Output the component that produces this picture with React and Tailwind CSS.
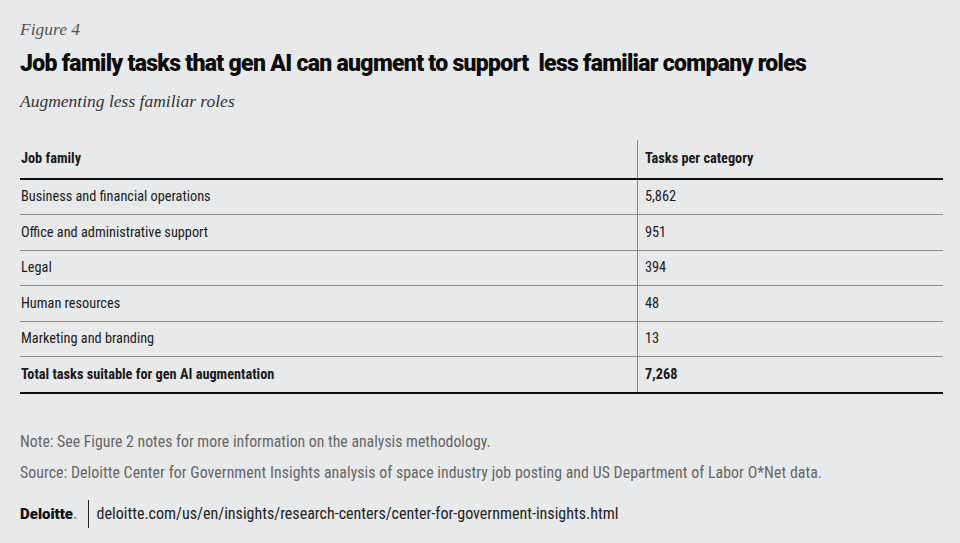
import React from "react";

const rows = [
  { name: "Business and financial operations", value: "5,862", h: "h-[35px]" },
  { name: "Office and administrative support", value: "951", h: "h-[36px]" },
  { name: "Legal", value: "394", h: "h-[35px]" },
  { name: "Human resources", value: "48", h: "h-[36px]" },
  { name: "Marketing and branding", value: "13", h: "h-[35px]" },
];

const cond = { fontFamily: '"Liberation Sans Narrow", "Roboto Condensed", "DejaVu Sans Condensed", Roboto, sans-serif' };

export default function App() {
  return (
    <div className="w-[960px] h-[543px] bg-[#e8e9eb] overflow-hidden px-[20px] pt-[18px]">
      <div
        className="text-[17.5px] leading-[22px] italic text-[#555]"
        style={{ fontFamily: '"Liberation Serif", serif' }}
      >
        Figure 4
      </div>
      <h1
        className="mt-[10px] text-[23px] leading-[28px] font-black text-[#0b0b0b] tracking-[-0.7px] whitespace-pre"
        style={{ fontFamily: 'Roboto, "Liberation Sans", sans-serif' }}
      >
        Job family tasks that gen AI can augment to support  less familiar company roles
      </h1>
      <div
        className="mt-[11px] text-[17.5px] leading-[24px] italic text-[#333]"
        style={{ fontFamily: '"Liberation Serif", serif' }}
      >
        Augmenting less familiar roles
      </div>

      <div className="mt-[27px] w-[923px] text-[14.3px] text-[#1a1a1a]" style={cond}>
        <div className="flex h-[38px] font-bold">
          <div className="w-[617px] flex items-center pl-[1px]">Job family</div>
          <div className="flex-1 flex items-center border-l border-[#888] pl-[7px]">Tasks per category</div>
        </div>
        <div className="h-[2px] bg-[#111]" />
        {rows.map((r) => (
          <div key={r.name} className={`flex ${r.h} border-b border-[#8a8a8a]`}>
            <div className="w-[617px] flex items-center pl-[1px]">{r.name}</div>
            <div className="flex-1 flex items-center border-l border-[#888] pl-[7px]">{r.value}</div>
          </div>
        ))}
        <div className="flex h-[35px] font-bold">
          <div className="w-[617px] flex items-center pl-[1px]">Total tasks suitable for gen AI augmentation</div>
          <div className="flex-1 flex items-center border-l border-[#888] pl-[7px]">7,268</div>
        </div>
        <div className="h-[2px] bg-[#111]" />
      </div>

      <div className="mt-[37px] text-[15.8px] leading-[22px] text-[#666]" style={cond}>
        <p>Note: See Figure 2 notes for more information on the analysis methodology.</p>
        <p className="mt-[9px] tracking-[0.07px]">
          Source: Deloitte Center for Government Insights analysis of space industry job posting and US Department of Labor O*Net data.
        </p>
      </div>

      <div className="mt-[16px] flex items-center h-[28px]">
        <div
          className="text-[15px] font-black text-[#111]"
          style={{ fontFamily: 'Roboto, "Liberation Sans", sans-serif' }}
        >
          Deloitte<span className="text-[#86bc25]">.</span>
        </div>
        <div className="ml-[10px] w-[1px] h-[28px] bg-[#222]" />
        <div className="ml-[8px] text-[16px] text-[#222]" style={cond}>
          deloitte.com/us/en/insights/research-centers/center-for-government-insights.html
        </div>
      </div>
    </div>
  );
}
